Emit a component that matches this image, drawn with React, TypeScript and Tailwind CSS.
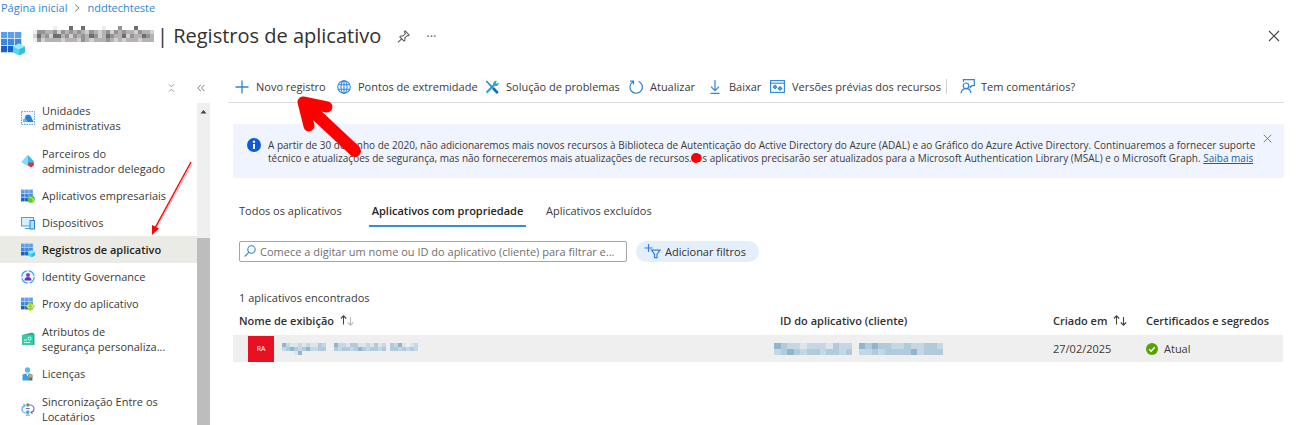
import React from "react";

type IconProps = { className?: string };

const GRID = [0, 1, 2];

function AppGrid({ badge, className = "size-[14px]" }: { badge: "cube" | "globe" | "code"; className?: string }) {
  return (
    <svg viewBox="0 0 24 24" className={className} aria-hidden="true">
      {GRID.map((r) =>
        GRID.map((c) => (
          <rect key={`${r}-${c}`} x={c * 7} y={1 + r * 7} width="6.3" height="6.3" fill={["#5b9fee", "#3c87e2", "#1c61c4"][r]} />
        ))
      )}
      {badge === "cube" && (
        <g>
          <path d="M18 12.5l6 3v6l-6 3-6-3v-6z" fill="#50d7f3" />
          <path d="M18 12.5l6 3-6 3-6-3z" fill="#9feaf9" />
          <path d="M18 18.5l6-3v6l-6 3z" fill="#32bedd" />
        </g>
      )}
      {badge === "globe" && (
        <g>
          <circle cx="17.5" cy="17.5" r="6.2" fill="#5fc04a" />
          <path d="M14 14l5 2 3 3-3 3" stroke="#b4ec36" strokeWidth="2" fill="none" />
        </g>
      )}
      {badge === "code" && (
        <g>
          <path d="M16 8l8 8-8 8-8-8z" fill="#a6cf2c" />
          <path d="M14 13l-3 3 3 3M18 13l3 3-3 3" stroke="#fff" strokeWidth="1.4" fill="none" />
        </g>
      )}
    </svg>
  );
}

function UnitsIcon() {
  return (
    <svg viewBox="0 0 14 14" className="size-[14px]" aria-hidden="true">
      <rect x=".5" y=".5" width="13" height="13" fill="#eef6fd" stroke="#5ea6e4" strokeDasharray="1.5 1" />
      <path d="M2 11c0-2.500 .5-3 2-3.500l.5-3c2-1.500 5-1 5.500 1l2.500 5.500z" fill="#2b7fd8" />
      <path d="M1.800 11c0-2.500 1-3.300 3-3.300l2 3.300z" fill="#6db4f2" />
    </svg>
  );
}

function PartnersIcon() {
  return (
    <svg viewBox="0 0 14 14" className="size-[14px]" aria-hidden="true">
      <path d="M7 1l6.5 7L7 12 .5 8z" fill="#3fb5e8" />
      <path d="M7 1v11L.5 8z" fill="#86ddf6" />
      <path d="M10 13.500c-5-3-3-6 0-4.500 3-1.500 5 1.500 0 4.500z" fill="#e0304a" />
    </svg>
  );
}

function DevicesIcon() {
  return (
    <svg viewBox="0 0 14 14" className="size-[14px]" aria-hidden="true">
      <rect x=".5" y="1.500" width="12" height="8.500" fill="#d5effc" stroke="#4a9fdf" />
      <path d="M4 12.500h5" stroke="#4a9fdf" />
      <rect x="9" y="4.500" width="4.500" height="8.500" fill="#b0e2fa" stroke="#2787d4" />
    </svg>
  );
}

function GovernanceIcon() {
  return (
    <svg viewBox="0 0 14 14" className="size-[14px]" aria-hidden="true">
      <circle cx="7" cy="7" r="6.200" fill="#eef5ff" stroke="#39a5e8" strokeWidth="1.200" strokeDasharray="8 1.700" />
      <circle cx="7" cy="5" r="2" fill="#7a45c5" />
      <path d="M3.500 10.500c0-2.500 1.500-3.500 3.500-3.500s3.500 1 3.500 3.500z" fill="#6a35b5" />
    </svg>
  );
}

function AttributesIcon() {
  return (
    <svg viewBox="0 0 14 14" className="size-[14px]" aria-hidden="true">
      <path d="M1 3l10-2.500 2.500 1.500v11H3L1 12z" fill="#27b08f" />
      <rect x="1" y="3" width="11" height="10" rx=".6" fill="#3cc9a8" />
      <path d="M3 10.500h6M3 8h3" stroke="#d9fff4" />
      <circle cx="8.500" cy="6.500" r="1.500" fill="none" stroke="#d9fff4" />
    </svg>
  );
}

function LicensesIcon() {
  return (
    <svg viewBox="0 0 14 14" className="size-[14px]" aria-hidden="true">
      <circle cx="6.500" cy="3" r="2.700" fill="#58b8e8" />
      <path d="M1.500 13.500V7.500c2-1.500 8-1.500 10 0v6z" fill="#3f9fdc" />
      <path d="M5 6.500h3l-1.500 3z" fill="#e6f6ff" />
      <circle cx="9.700" cy="9.500" r="1.900" fill="#f59b23" />
      <path d="M8.500 10.500h2.500v3.300l-1.200-1-1.300 1z" fill="#b3541e" />
    </svg>
  );
}

function SyncIcon() {
  return (
    <svg viewBox="0 0 14 14" className="size-[14px]" aria-hidden="true" fill="none">
      <path d="M6 3h3.500a3.700 3.700 0 013.500 4c0 2-1 3-2.500 3.200M12 9l-2 1.300 1.500 1.500" stroke="#8f5bc4" strokeWidth="1.100" />
      <path d="M8 11H4.500A3.700 3.700 0 011 7c0-2 1-3 2.500-3.200M2 5l2-1.300L2.500 2.200" stroke="#4eaee0" strokeWidth="1.100" />
      <circle cx="6.800" cy="3" r="1.700" fill="#6a9a5a" />
      <path d="M4.500 7c0-1.500 4.600-1.500 4.600 0z" fill="#7a52b8" />
      <circle cx="6.800" cy="10" r="1.700" fill="#3aa7d8" />
      <path d="M4.500 13.500c0-1.500 4.600-1.500 4.600 0z" fill="#2b8fd0" />
    </svg>
  );
}

const NAV: { lines: string[]; icon: React.ReactNode; active?: boolean }[] = [
  { lines: ["Unidades", "administrativas"], icon: <UnitsIcon /> },
  { lines: ["Parceiros do", "administrador delegado"], icon: <PartnersIcon /> },
  { lines: ["Aplicativos empresariais"], icon: <AppGrid badge="globe" /> },
  { lines: ["Dispositivos"], icon: <DevicesIcon /> },
  { lines: ["Registros de aplicativo"], icon: <AppGrid badge="cube" />, active: true },
  { lines: ["Identity Governance"], icon: <GovernanceIcon /> },
  { lines: ["Proxy do aplicativo"], icon: <AppGrid badge="code" /> },
  { lines: ["Atributos de", "segurança personaliza..."], icon: <AttributesIcon /> },
  { lines: ["Licenças"], icon: <LicensesIcon /> },
  { lines: ["Sincronização Entre os", "Locatários"], icon: <SyncIcon /> },
];

function PlusIcon() {
  return (
    <svg viewBox="0 0 14 14" className="size-[14px]" fill="none" stroke="#2f86d6" strokeWidth="1.300" aria-hidden="true">
      <path d="M7 .5v13M.5 7h13" />
    </svg>
  );
}

function GlobeIcon() {
  return (
    <svg viewBox="0 0 14 14" className="size-[14px]" fill="none" stroke="#2f86d6" strokeWidth="1.100" aria-hidden="true">
      <circle cx="7" cy="7" r="6.300" />
      <ellipse cx="7" cy="7" rx="3" ry="6.300" />
      <path d="M7 .7v12.600M1.300 4.700h11.400M1.300 9.300h11.400" />
    </svg>
  );
}

function ToolsIcon() {
  return (
    <svg viewBox="0 0 14 14" className="size-[14px]" fill="none" strokeLinecap="round" aria-hidden="true">
      <path d="M2.200 12L10 4" stroke="#2aa9de" strokeWidth="2.400" />
      <path d="M8.500 5A3 3 0 0112 .8l-1.300 2 1 1 2-1.300A3 3 0 0110 6z" fill="#2aa9de" />
      <path d="M1.800 1.500L7 7" stroke="#1c8ed8" strokeWidth="1.700" />
      <path d="M8.700 8.700l3.300 3.500" stroke="#1769b8" strokeWidth="2.700" />
    </svg>
  );
}

function RefreshIcon() {
  return (
    <svg viewBox="0 0 14 14" className="size-[14px]" fill="none" stroke="#2f86d6" strokeWidth="1.200" aria-hidden="true">
      <path d="M9.500 1.300A6.200 6.200 0 114 1.700M4.500 4.500V1.200H1" />
    </svg>
  );
}

function DownloadIcon() {
  return (
    <svg viewBox="0 0 14 14" className="size-[14px]" fill="none" stroke="#2f86d6" strokeWidth="1.200" aria-hidden="true">
      <path d="M7 0v10.500M3 6.700l4 4 4-4M2.500 13.300h9" />
    </svg>
  );
}

function PreviewIcon() {
  return (
    <svg viewBox="0 0 15 13" className="h-[13px] w-[15px]" fill="none" stroke="#2f86d6" strokeWidth="1.100" aria-hidden="true">
      <rect x=".6" y=".6" width="13.800" height="11.800" />
      <path d="M.6 3.200h13.800" />
      <path d="M5 5.200l1.700 1.700L5 8.600 3.300 6.900zM10 6.700l1.800 1.800-1.800 1.800-1.800-1.800z" fill="#5fa8e8" />
    </svg>
  );
}

function FeedbackIcon() {
  return (
    <svg viewBox="0 0 15 15" className="size-[15px]" fill="none" stroke="#2f86d6" strokeWidth="1.200" aria-hidden="true">
      <circle cx="6" cy="6.800" r="2.800" />
      <path d="M1 14.300c.3-3 2.200-4.700 5-4.700s4.700 1.700 5 4.700" />
      <path d="M3.500 3V.7h10.800v6H12l-1.800 2V6.700" />
    </svg>
  );
}

function PinIcon() {
  return (
    <svg viewBox="0 0 14 14" className="size-[13px]" fill="none" stroke="#555" strokeWidth="1.100" aria-hidden="true">
      <path d="M8.700 1l4.300 4.300-1 .8-.8-.2-2.700 2.700.1 2.400-1.100 1L3 7.500l1-1.100 2.400.1L9.100 3.800 8 2.200zM5 9.500L1 13.300" />
    </svg>
  );
}

function CloseIcon({ className }: IconProps) {
  return (
    <svg viewBox="0 0 12 12" className={className} fill="none" stroke="currentColor" strokeWidth="1.100" aria-hidden="true">
      <path d="M1 1l10 10M11 1L1 11" />
    </svg>
  );
}

function SortIcon({ up, down }: { up: string; down: string }) {
  return (
    <svg viewBox="0 0 14 11" className="h-[11px] w-[14px]" fill="none" strokeWidth="1.100" aria-hidden="true">
      <path d="M3.500 9.500V.7M.8 3.500L3.500.8l2.700 2.700" stroke={up} />
      <path d="M10.500 2v8.300M7.800 7.500l2.700 2.700 2.700-2.700" stroke={down} />
    </svg>
  );
}

const COMMANDS: { label: string; icon: React.ReactNode; width: string }[] = [
  { label: "Novo registro", icon: <PlusIcon />, width: "w-[102px]" },
  { label: "Pontos de extremidade", icon: <GlobeIcon />, width: "w-[148px]" },
  { label: "Solução de problemas", icon: <ToolsIcon />, width: "w-[144px]" },
  { label: "Atualizar", icon: <RefreshIcon />, width: "w-[79px]" },
  { label: "Baixar", icon: <DownloadIcon />, width: "w-[62px]" },
  { label: "Versões prévias dos recursos", icon: <PreviewIcon />, width: "w-[176px]" },
];

/* Each character is one mosaic cell: 0 is blank, larger digits are darker. */
function Mosaic({ rows, palette, cell, className, label }: { rows: string[]; palette: string[]; cell: number; className: string; label: string }) {
  return (
    <svg viewBox={`0 0 ${rows[0].length * cell} ${rows.length * cell}`} preserveAspectRatio="none" className={className} role="img" aria-label={label} shapeRendering="crispEdges">
      {rows.map((row, y) =>
        row.split("").map((ch, x) =>
          ch === "0" ? null : <rect key={`${x}-${y}`} x={x * cell} y={y * cell} width={cell} height={cell} fill={palette[Number(ch)]} />
        )
      )}
    </svg>
  );
}

const GREYS = ["", "#efedeb", "#d3cfcc", "#b5b2b2", "#949396", "#6e6d72"];
const BLUES = ["", "#dde5ea", "#c5d7e2", "#b1cbdc", "#90b5ce", "#6fa2c6"];

export default function App() {
  return (
    <div className="relative min-h-screen overflow-hidden bg-white font-['Open_Sans','Noto_Sans',sans-serif] text-[11px] leading-[15px] text-[#3b3a39]">
      <header>
        <nav aria-label="Trilha" className="flex h-[15px] items-center gap-[7px] pl-px text-[#2f86d6]">
          <a href="#inicio">Página inicial</a>
          <svg viewBox="0 0 6 8" className="h-2 w-[6px]" fill="none" stroke="#888" aria-hidden="true"><path d="M1 .5L5 4 1 7.500" /></svg>
          <a href="#diretorio">nddtechteste</a>
        </nav>
        <div className="flex h-[42px] items-center pr-[17px] pl-px">
          <AppGrid badge="cube" className="mt-[14px] size-6 shrink-0" />
          <h1 className="ml-2 flex items-center text-[20px] leading-6 text-[#323130]">
            <Mosaic
              label="Nome oculto"
              className="h-5 w-[121px]"
              cell={4}
              palette={GREYS}
              rows={["000001000500500001000400050000", "144334243434324323424343324332", "253425534243435423543352433543", "142333323332432333432323332333", "000000000000000000000000000000"]}
            />
            <span className="ml-[3px]">| Registros de aplicativo</span>
          </h1>
          <button aria-label="Fixar" className="ml-4"><PinIcon /></button>
          <button aria-label="Mais" className="ml-4 text-[13px] text-[#666]">···</button>
          <button aria-label="Fechar" className="ml-auto text-[#444]"><CloseIcon className="size-3" /></button>
        </div>
      </header>

      <div className="flex">
        <aside className="w-[210px] shrink-0">
          <div className="flex h-[46px] items-center justify-end gap-[22px] pt-[15px] pr-[5px] text-[#777]">
            <button aria-label="Recolher tudo">
              <svg viewBox="0 0 8 10" className="h-2 w-[7px]" fill="none" stroke="currentColor" aria-hidden="true"><path d="M1 .5l3 3 3-3M1 9.500l3-3 3 3" /></svg>
            </button>
            <button aria-label="Ocultar menu">
              <svg viewBox="0 0 8 8" className="size-2" fill="none" stroke="currentColor" aria-hidden="true"><path d="M3.800.8L.8 4l3 3.200M7.500.8L4.500 4l3 3.200" /></svg>
            </button>
          </div>
          <div className="flex">
            <ul className="-mt-[7px] min-w-0 flex-1">
              {NAV.map((item) => (
                <li key={item.lines[0]} className={item.active ? "bg-[#ebebe6] font-semibold text-[#252423]" : ""}>
                  <a href="#menu" className={item.lines.length > 1 ? "flex min-h-[43px] items-center gap-[7px] pl-[21px]" : "flex min-h-[27px] items-center gap-[7px] pl-[21px]"}>
                    <span className="shrink-0">{item.icon}</span>
                    <span className="whitespace-nowrap">
                      {item.lines.map((line) => (
                        <span key={line} className="block">{line}</span>
                      ))}
                    </span>
                  </a>
                </li>
              ))}
            </ul>
            <div className="flex w-[13px] flex-col bg-[#efefef]" aria-hidden="true">
              <svg viewBox="0 0 13 16" className="h-4 w-[13px]"><path d="M3.500 10.500L6.500 7 9.500 10.500z" fill="#444" /></svg>
              <div className="mt-[119px] flex-1 bg-[#bdbdbd]" />
            </div>
          </div>
        </aside>

        <main className="min-w-0 flex-1 pt-[14px] pr-[13px] pl-[18px]">
          <div role="toolbar" className="flex h-[32px] items-center border-b border-[#dedede] pl-[7px] whitespace-nowrap">
            {COMMANDS.map((c) => (
              <button key={c.label} className={`flex shrink-0 items-center gap-[7px] ${c.width}`}>
                {c.icon}
                <span>{c.label}</span>
              </button>
            ))}
            <button className="flex items-center gap-[6px] border-l border-[#d0d0d0] pl-[13px]">
              <FeedbackIcon />
              <span>Tem comentários?</span>
            </button>
          </div>

          <section className="mt-[21px] ml-[5px] flex h-[54px] items-start bg-[#f0f4ff] pr-[12px] pl-[14px]">
            <svg viewBox="0 0 14 14" className="mt-[14px] size-[14px] shrink-0" aria-hidden="true">
              <circle cx="7" cy="7" r="7" fill="#0f5bd7" />
              <path d="M7 6v5" stroke="#fff" strokeWidth="2" />
              <circle cx="7" cy="3.700" r="1.200" fill="#fff" />
            </svg>
            <p className="mt-[15px] ml-[7px] min-w-0 flex-1 text-[10px] leading-[13px] whitespace-nowrap">
              A partir de 30 de junho de 2020, não adicionaremos mais novos recursos à Biblioteca de Autenticação do Active Directory do Azure (ADAL) e ao Gráfico do Azure Active Directory. Continuaremos a fornecer suporte<br />
              técnico e atualizações de segurança, mas não forneceremos mais atualizações de recursos. Os aplicativos precisarão ser atualizados para a Microsoft Authentication Library (MSAL) e o Microsoft Graph.{" "}
              <a href="#saiba-mais" className="text-[#1c5f9c] underline">Saiba mais</a>
            </p>
            <button aria-label="Fechar aviso" className="mt-[10px] text-[#666]"><CloseIcon className="size-[9px]" /></button>
          </section>

          <div role="tablist" className="mt-[23px] ml-[11px] flex items-start gap-6">
            <button role="tab" aria-selected="false" className="h-[26px] w-[106px] pb-[7px] text-left whitespace-nowrap">Todos os aplicativos</button>
            <button role="tab" aria-selected="true" className="h-[26px] w-[157px] border-b-2 border-[#2f8fdc] pb-[5px] font-semibold whitespace-nowrap text-[#252423]">Aplicativos com propriedade</button>
            <button role="tab" aria-selected="false" className="-ml-1 h-[26px] pb-[7px] whitespace-nowrap">Aplicativos excluídos</button>
          </div>

          <div className="mt-[13px] ml-[11px] flex h-[22px] items-center gap-[9px]">
            <label className="flex h-[21px] w-[388px] items-center gap-1 rounded-[2px] border border-[#a5a5a5] px-1">
              <svg viewBox="0 0 12 12" className="size-3 shrink-0" fill="none" stroke="#2f86d6" strokeWidth="1.100" aria-hidden="true"><circle cx="7.500" cy="4.500" r="3.700" /><path d="M5 7.200L.7 11.500" /></svg>
              <input type="text" aria-label="Filtrar aplicativos" placeholder="Comece a digitar um nome ou ID do aplicativo (cliente) para filtrar e..." className="min-w-0 flex-1 outline-none placeholder:text-[#707070]" />
            </label>
            <button className="flex h-[21px] w-[123px] items-center gap-1 rounded-full bg-[#e5effb] pl-2 font-medium whitespace-nowrap text-[#323130]">
              <svg viewBox="0 0 17 15" className="h-[15px] w-[17px]" fill="none" stroke="#2f7fe0" strokeWidth="1.200" aria-hidden="true"><path d="M4.500 0v8M.5 4h8M7.500 6.200h8.500l-3 4v3.500h-2.500v-3.500z" /></svg>
              <span>Adicionar filtros</span>
            </button>
          </div>

          <p className="mt-[28px] ml-[11px]">1 aplicativos encontrados</p>
          <table className="ml-[5px] w-[calc(100%-6px)] table-fixed text-left whitespace-nowrap">
            <thead>
              <tr className="h-[30px] text-[#323130]">
                <th className="pl-[6px] font-semibold"><span className="flex items-center gap-[6px]">Nome de exibição <SortIcon up="#444" down="#bbb" /></span></th>
                <th className="w-[273px] font-semibold">ID do aplicativo (cliente)</th>
                <th className="w-[93px] font-semibold"><span className="flex items-center gap-[6px]">Criado em <SortIcon up="#444" down="#444" /></span></th>
                <th className="w-[137px] font-semibold">Certificados e segredos</th>
              </tr>
            </thead>
            <tbody>
              <tr className="h-[27px] bg-[#efefef]">
                <td className="pl-[15px]">
                  <span className="flex items-center gap-2">
                    <span className="flex size-[26px] items-center justify-center bg-[#e81123] text-[7px] text-white">RA</span>
                    <Mosaic label="Nome oculto" className="h-3 w-[136px]" cell={4} palette={BLUES} rows={["4211212113200422133112131203241012", "2343234223300323323432332303323232", "0001400000000000000000000000000000"]} />
                  </span>
                </td>
                <td>
                  <Mosaic label="ID oculto" className="-ml-[6px] h-3 w-[169px]" cell={6} palette={BLUES} rows={["43221222132204343322322332", "23432332332302232333342333"]} />
                </td>
                <td>27/02/2025</td>
                <td>
                  <span className="flex items-center gap-[6px]">
                    <svg viewBox="0 0 12 12" className="size-3" aria-hidden="true"><circle cx="6" cy="6" r="6" fill="#57a300" /><path d="M3.200 6.200l2 2 3.500-4" fill="none" stroke="#fff" strokeWidth="1.400" /></svg>
                    Atual
                  </span>
                </td>
              </tr>
            </tbody>
          </table>
        </main>
      </div>

      <svg viewBox="0 0 70 70" className="pointer-events-none absolute top-[92px] left-[294px] size-[70px]" fill="none" stroke="#f00" strokeWidth="11" strokeLinecap="round" strokeLinejoin="round" aria-hidden="true">
        <path d="M61 59L13 14" strokeWidth="12" />
        <path d="M33 15L9 10l6 24" />
      </svg>
      <svg viewBox="0 0 50 80" className="pointer-events-none absolute top-[160px] left-[148px] h-20 w-[50px]" aria-hidden="true">
        <path d="M44 4L9 67" stroke="#c9c9c9" strokeWidth="1.500" />
        <path d="M43 2L7 68" stroke="#f00" strokeWidth="1.400" />
        <path d="M4 75V65l7 3.500z" fill="#f00" />
      </svg>
      <div className="pointer-events-none absolute top-[153px] left-[691px] size-[10px] rounded-full bg-[#f00]" />
    </div>
  );
}
